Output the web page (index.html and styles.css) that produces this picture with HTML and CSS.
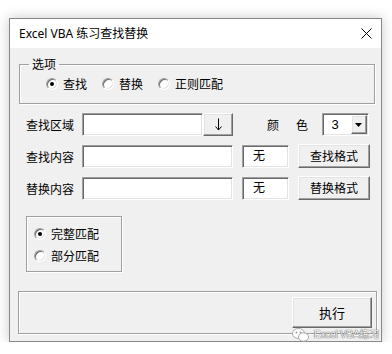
FILE: index.html
```html
<!DOCTYPE html>
<html lang="zh-CN">
<head>
    <meta charset="UTF-8">
    <meta name="viewport" content="width=device-width, initial-scale=1.0">
    <title>Excel VBA 练习查找替换</title>
    <link rel="stylesheet" href="styles.css">
</head>
<body>
    <div class="window">
        <div class="titlebar">
            <span class="title">Excel VBA 练习查找替换</span>
            <svg class="close" width="11" height="11" viewBox="0 0 11 11">
                <path d="M0.5 0.5L10.5 10.5M10.5 0.5L0.5 10.5" stroke="#000" stroke-width="1" fill="none"/>
            </svg>
        </div>
        <div class="client">
            <fieldset class="group options">
                <legend>选项</legend>
                <div class="opt-row">
                    <span class="opt"><span class="radio checked"></span>查找</span>
                    <span class="opt"><span class="radio"></span>替换</span>
                    <span class="opt"><span class="radio"></span>正则匹配</span>
                </div>
            </fieldset>

            <div class="rows">
                <div class="row">
                    <span class="label">查找区域</span>
                    <span class="field range"></span>
                    <span class="btn pick">
                        <svg width="7" height="13" viewBox="0 0 7 13">
                            <path d="M3.5 0.5V12M0.5 8.5L3.5 12L6.5 8.5" stroke="#000" stroke-width="1" fill="none"/>
                        </svg>
                    </span>
                    <span class="color-label">颜　色</span>
                    <span class="combo">
                        <span class="combo-val">3</span>
                        <span class="btn combo-btn">
                            <svg width="7" height="4" viewBox="0 0 7 4"><path d="M0 0H7L3.5 4Z" fill="#000"/></svg>
                        </span>
                    </span>
                </div>
                <div class="row">
                    <span class="label">查找内容</span>
                    <span class="field text"></span>
                    <span class="field fmt">无</span>
                    <span class="btn fmt-btn">查找格式</span>
                </div>
                <div class="row">
                    <span class="label">替换内容</span>
                    <span class="field text"></span>
                    <span class="field fmt">无</span>
                    <span class="btn fmt-btn">替换格式</span>
                </div>
            </div>

            <div class="group match">
                <span class="opt"><span class="radio checked"></span>完整匹配</span>
                <span class="opt"><span class="radio"></span>部分匹配</span>
            </div>

            <div class="group footer">
                <span class="btn run">执行</span>
            </div>
        </div>

        <div class="watermark">
            <svg width="17" height="14" viewBox="0 0 17 14">
                <ellipse cx="6.5" cy="5.5" rx="6" ry="5" fill="#fff" stroke="#a8a8a8"/>
                <ellipse cx="11.5" cy="9" rx="5" ry="4.2" fill="#fff" stroke="#a8a8a8"/>
                <circle cx="4.5" cy="4.5" r="0.9" fill="#999"/>
                <circle cx="8.5" cy="4.5" r="0.9" fill="#999"/>
            </svg>
            <span>Excel VBA练习</span>
        </div>
    </div>
</body>
</html>
```

FILE: styles.css
```css
body {
    margin: 0;
    padding: 18px 0 0 9px;
    background-color: #fff;
    font-family: "Noto Sans CJK SC", "Noto Sans", sans-serif;
    font-size: 12px;
    color: #000;
}
.window {
    position: relative;
    box-sizing: border-box;
    width: 373px;
    height: 324px;
    border: 1px solid #888;
    background-color: #f0f0f0;
    box-shadow: 0 0 12px rgba(0, 0, 0, 0.22);
}
.titlebar {
    height: 29px;
    background-color: #fff;
    display: flex;
    align-items: center;
    justify-content: space-between;
    padding: 0 9px 0 9px;
}
.title {
    font-family: "Noto Sans", "Noto Sans CJK SC", sans-serif;
    font-size: 12px;
    line-height: 14px;
}
.close {
    display: block;
}
.client {
    height: 292px;
    overflow: hidden;
}

/* etched frames */
.group {
    box-sizing: border-box;
    border: 1px solid #a0a0a0;
    box-shadow: 1px 1px 0 #fff, inset 1px 1px 0 #fff;
}
fieldset.options {
    margin: 9px 6px 0 9px;
    padding: 0;
    min-width: 0;
}
.options legend {
    margin-left: 9px;
    padding: 0 3px;
    line-height: 14px;
}
.opt-row {
    display: flex;
    gap: 15px;
    padding: 6px 0 12px 26px;
}
.opt {
    display: flex;
    align-items: center;
    gap: 5px;
    line-height: 14px;
}
.radio {
    position: relative;
    box-sizing: border-box;
    width: 12px;
    height: 12px;
    border-radius: 50%;
    background-color: #fff;
    border: 1px solid;
    border-color: #a0a0a0 #fff #fff #a0a0a0;
    box-shadow: inset 1px 1px 0 #696969, inset -1px -1px 0 #e3e3e3;
}
.radio.checked::after {
    content: "";
    position: absolute;
    left: 3px;
    top: 3px;
    width: 4px;
    height: 4px;
    border-radius: 50%;
    background-color: #000;
}

/* form rows */
.rows {
    margin-top: 9px;
    padding-left: 16px;
    display: flex;
    flex-direction: column;
    gap: 9px;
}
.row {
    display: flex;
    align-items: center;
    height: 23px;
}
.label {
    width: 56px;
    line-height: 14px;
}
.field {
    box-sizing: border-box;
    height: 23px;
    background-color: #fff;
    border: 1px solid;
    border-color: #a0a0a0 #fff #fff #a0a0a0;
    box-shadow: inset 1px 1px 0 #696969, inset -1px -1px 0 #e3e3e3;
}
.field.range {
    width: 121px;
}
.field.text {
    width: 151px;
}
.field.fmt {
    width: 47px;
    margin-left: 9px;
    padding: 2px 0 0 10px;
    line-height: 14px;
}
.btn {
    box-sizing: border-box;
    display: flex;
    align-items: center;
    justify-content: center;
    background-color: #f0f0f0;
    border: 1px solid;
    border-color: #fff #696969 #696969 #fff;
    box-shadow: inset -1px -1px 0 #a0a0a0, inset 1px 1px 0 #e3e3e3;
    line-height: 14px;
}
.pick {
    width: 30px;
    height: 23px;
}
.color-label {
    margin-left: 34px;
    letter-spacing: 2.5px;
    line-height: 14px;
}
.combo {
    box-sizing: border-box;
    display: flex;
    width: 47px;
    height: 23px;
    margin-left: 11px;
    padding: 1px;
    background-color: #fff;
    border: 1px solid;
    border-color: #a0a0a0 #fff #fff #a0a0a0;
    box-shadow: inset 1px 1px 0 #696969, inset -1px -1px 0 #e3e3e3;
}
.combo-val {
    flex: 1;
    padding-left: 8px;
    font-family: "Liberation Sans", sans-serif;
    font-size: 13px;
    line-height: 19px;
}
.combo-btn {
    width: 16px;
    height: 19px;
}
.fmt-btn {
    width: 72px;
    height: 24px;
    margin: -2px 0 0 9px;
}

/* match options */
.match {
    width: 96px;
    height: 56px;
    margin: 16px 0 0 16px;
    padding: 10px 0 0 7px;
    display: flex;
    flex-direction: column;
    gap: 8px;
}

/* footer */
.footer {
    height: 43px;
    margin: 19px 4px 0 8px;
    padding: 5px 4px 0 0;
    display: flex;
    justify-content: flex-end;
}
.run {
    width: 80px;
    height: 31px;
    font-size: 13px;
}

.watermark {
    position: absolute;
    right: 2px;
    bottom: -1px;
    display: flex;
    align-items: center;
    gap: 5px;
    font-family: "Liberation Sans", "Noto Sans CJK SC", sans-serif;
    font-size: 10px;
    line-height: 14px;
    letter-spacing: -0.2px;
    color: #f6f6f6;
    text-shadow: 0 0 1px #555, 0 0 1px #555;
}
.watermark svg {
    display: block;
}
```
